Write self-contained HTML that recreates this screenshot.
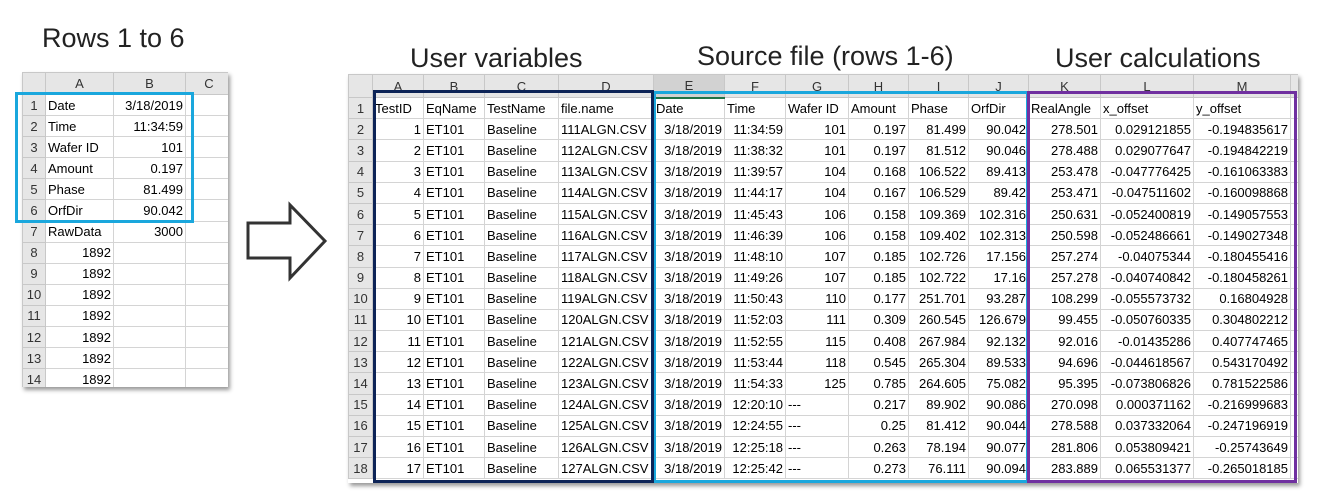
<!DOCTYPE html>
<html><head><meta charset="utf-8"><style>
body{margin:0;width:1320px;height:496px;background:#fff;position:relative;overflow:hidden;font-family:"Liberation Sans",Arial,sans-serif}
.t{position:absolute;font-size:27px;color:#222;white-space:nowrap}
table{border-collapse:collapse;position:absolute;table-layout:fixed;font-size:13px;color:#000}
tr{height:21.2px}
#s tr{height:21.1px}
td{border:1px solid #d4d4d4;padding:0 2px;white-space:nowrap;overflow:hidden}
td.h{background:#e6e6e6;color:#333;text-align:center;border-color:#c8c8c8}
td.r{text-align:right}
.box{position:absolute;box-sizing:border-box}
</style></head><body>
<div class="t" style="left:42px;top:23px">Rows 1 to 6</div>
<div class="t" style="left:410px;top:43px">User variables</div>
<div class="t" style="left:697px;top:41px">Source file (rows 1-6)</div>
<div class="t" style="left:1055px;top:43px">User calculations</div>

<div style="position:absolute;left:22px;top:72px;width:206px;height:315px;box-shadow:2px 3px 4px #999;overflow:hidden;background:#fff">
<table id="s" style="left:0;top:0;width:210px">
<colgroup><col style="width:23px"><col style="width:68px"><col style="width:72px"><col style="width:47px"></colgroup>
<tr style="height:22px"><td class="h"></td><td class="h">A</td><td class="h">B</td><td class="h">C</td></tr>
<tr><td class="h">1</td><td>Date</td><td class="r">3/18/2019</td><td></td></tr>
<tr><td class="h">2</td><td>Time</td><td class="r">11:34:59</td><td></td></tr>
<tr><td class="h">3</td><td>Wafer ID</td><td class="r">101</td><td></td></tr>
<tr><td class="h">4</td><td>Amount</td><td class="r">0.197</td><td></td></tr>
<tr><td class="h">5</td><td>Phase</td><td class="r">81.499</td><td></td></tr>
<tr><td class="h">6</td><td>OrfDir</td><td class="r">90.042</td><td></td></tr>
<tr><td class="h">7</td><td>RawData</td><td class="r">3000</td><td></td></tr>
<tr><td class="h">8</td><td class="r">1892</td><td></td><td></td></tr>
<tr><td class="h">9</td><td class="r">1892</td><td></td><td></td></tr>
<tr><td class="h">10</td><td class="r">1892</td><td></td><td></td></tr>
<tr><td class="h">11</td><td class="r">1892</td><td></td><td></td></tr>
<tr><td class="h">12</td><td class="r">1892</td><td></td><td></td></tr>
<tr><td class="h">13</td><td class="r">1892</td><td></td><td></td></tr>
<tr><td class="h">14</td><td class="r">1892</td><td></td><td></td></tr>
</table></div>
<div class="box" style="left:15px;top:92px;width:179px;height:131px;border:3px solid #1aa7dd"></div>

<svg style="position:absolute;left:0;top:0" width="1320" height="496"><path d="M248 223H290V205L325 241L290 278V258H248Z" fill="#fff" stroke="#333" stroke-width="3"/></svg>

<div style="position:absolute;left:348px;top:74px;width:950px;height:409px;box-shadow:2px 3px 4px #999;overflow:hidden;background:#fff">
<table style="left:0;top:0;width:960px">
<colgroup><col style="width:24px"><col style="width:51px"><col style="width:61px"><col style="width:74px"><col style="width:95px"><col style="width:71px"><col style="width:61px"><col style="width:63px"><col style="width:60px"><col style="width:60px"><col style="width:60px"><col style="width:72px"><col style="width:93px"><col style="width:97px"><col style="width:18px"></colgroup>
<tr style="height:23px"><td class="h"></td><td class="h">A</td><td class="h">B</td><td class="h">C</td><td class="h">D</td><td class="h" style="background:#d2d2d2;border-bottom:2px solid #217346">E</td><td class="h">F</td><td class="h">G</td><td class="h">H</td><td class="h">I</td><td class="h">J</td><td class="h">K</td><td class="h">L</td><td class="h">M</td><td class="h"></td></tr>
<tr><td class="h">1</td><td>TestID</td><td>EqName</td><td>TestName</td><td>file.name</td><td>Date</td><td>Time</td><td>Wafer ID</td><td>Amount</td><td>Phase</td><td>OrfDir</td><td>RealAngle</td><td>x_offset</td><td>y_offset</td><td></td></tr>
<tr><td class="h">2</td><td class="r">1</td><td>ET101</td><td>Baseline</td><td>111ALGN.CSV</td><td class="r">3/18/2019</td><td class="r">11:34:59</td><td class="r">101</td><td class="r">0.197</td><td class="r">81.499</td><td class="r">90.042</td><td class="r">278.501</td><td class="r">0.029121855</td><td class="r">-0.194835617</td><td></td></tr>
<tr><td class="h">3</td><td class="r">2</td><td>ET101</td><td>Baseline</td><td>112ALGN.CSV</td><td class="r">3/18/2019</td><td class="r">11:38:32</td><td class="r">101</td><td class="r">0.197</td><td class="r">81.512</td><td class="r">90.046</td><td class="r">278.488</td><td class="r">0.029077647</td><td class="r">-0.194842219</td><td></td></tr>
<tr><td class="h">4</td><td class="r">3</td><td>ET101</td><td>Baseline</td><td>113ALGN.CSV</td><td class="r">3/18/2019</td><td class="r">11:39:57</td><td class="r">104</td><td class="r">0.168</td><td class="r">106.522</td><td class="r">89.413</td><td class="r">253.478</td><td class="r">-0.047776425</td><td class="r">-0.161063383</td><td></td></tr>
<tr><td class="h">5</td><td class="r">4</td><td>ET101</td><td>Baseline</td><td>114ALGN.CSV</td><td class="r">3/18/2019</td><td class="r">11:44:17</td><td class="r">104</td><td class="r">0.167</td><td class="r">106.529</td><td class="r">89.42</td><td class="r">253.471</td><td class="r">-0.047511602</td><td class="r">-0.160098868</td><td></td></tr>
<tr><td class="h">6</td><td class="r">5</td><td>ET101</td><td>Baseline</td><td>115ALGN.CSV</td><td class="r">3/18/2019</td><td class="r">11:45:43</td><td class="r">106</td><td class="r">0.158</td><td class="r">109.369</td><td class="r">102.316</td><td class="r">250.631</td><td class="r">-0.052400819</td><td class="r">-0.149057553</td><td></td></tr>
<tr><td class="h">7</td><td class="r">6</td><td>ET101</td><td>Baseline</td><td>116ALGN.CSV</td><td class="r">3/18/2019</td><td class="r">11:46:39</td><td class="r">106</td><td class="r">0.158</td><td class="r">109.402</td><td class="r">102.313</td><td class="r">250.598</td><td class="r">-0.052486661</td><td class="r">-0.149027348</td><td></td></tr>
<tr><td class="h">8</td><td class="r">7</td><td>ET101</td><td>Baseline</td><td>117ALGN.CSV</td><td class="r">3/18/2019</td><td class="r">11:48:10</td><td class="r">107</td><td class="r">0.185</td><td class="r">102.726</td><td class="r">17.156</td><td class="r">257.274</td><td class="r">-0.04075344</td><td class="r">-0.180455416</td><td></td></tr>
<tr><td class="h">9</td><td class="r">8</td><td>ET101</td><td>Baseline</td><td>118ALGN.CSV</td><td class="r">3/18/2019</td><td class="r">11:49:26</td><td class="r">107</td><td class="r">0.185</td><td class="r">102.722</td><td class="r">17.16</td><td class="r">257.278</td><td class="r">-0.040740842</td><td class="r">-0.180458261</td><td></td></tr>
<tr><td class="h">10</td><td class="r">9</td><td>ET101</td><td>Baseline</td><td>119ALGN.CSV</td><td class="r">3/18/2019</td><td class="r">11:50:43</td><td class="r">110</td><td class="r">0.177</td><td class="r">251.701</td><td class="r">93.287</td><td class="r">108.299</td><td class="r">-0.055573732</td><td class="r">0.16804928</td><td></td></tr>
<tr><td class="h">11</td><td class="r">10</td><td>ET101</td><td>Baseline</td><td>120ALGN.CSV</td><td class="r">3/18/2019</td><td class="r">11:52:03</td><td class="r">111</td><td class="r">0.309</td><td class="r">260.545</td><td class="r">126.679</td><td class="r">99.455</td><td class="r">-0.050760335</td><td class="r">0.304802212</td><td></td></tr>
<tr><td class="h">12</td><td class="r">11</td><td>ET101</td><td>Baseline</td><td>121ALGN.CSV</td><td class="r">3/18/2019</td><td class="r">11:52:55</td><td class="r">115</td><td class="r">0.408</td><td class="r">267.984</td><td class="r">92.132</td><td class="r">92.016</td><td class="r">-0.01435286</td><td class="r">0.407747465</td><td></td></tr>
<tr><td class="h">13</td><td class="r">12</td><td>ET101</td><td>Baseline</td><td>122ALGN.CSV</td><td class="r">3/18/2019</td><td class="r">11:53:44</td><td class="r">118</td><td class="r">0.545</td><td class="r">265.304</td><td class="r">89.533</td><td class="r">94.696</td><td class="r">-0.044618567</td><td class="r">0.543170492</td><td></td></tr>
<tr><td class="h">14</td><td class="r">13</td><td>ET101</td><td>Baseline</td><td>123ALGN.CSV</td><td class="r">3/18/2019</td><td class="r">11:54:33</td><td class="r">125</td><td class="r">0.785</td><td class="r">264.605</td><td class="r">75.082</td><td class="r">95.395</td><td class="r">-0.073806826</td><td class="r">0.781522586</td><td></td></tr>
<tr><td class="h">15</td><td class="r">14</td><td>ET101</td><td>Baseline</td><td>124ALGN.CSV</td><td class="r">3/18/2019</td><td class="r">12:20:10</td><td>---</td><td class="r">0.217</td><td class="r">89.902</td><td class="r">90.086</td><td class="r">270.098</td><td class="r">0.000371162</td><td class="r">-0.216999683</td><td></td></tr>
<tr><td class="h">16</td><td class="r">15</td><td>ET101</td><td>Baseline</td><td>125ALGN.CSV</td><td class="r">3/18/2019</td><td class="r">12:24:55</td><td>---</td><td class="r">0.25</td><td class="r">81.412</td><td class="r">90.044</td><td class="r">278.588</td><td class="r">0.037332064</td><td class="r">-0.247196919</td><td></td></tr>
<tr><td class="h">17</td><td class="r">16</td><td>ET101</td><td>Baseline</td><td>126ALGN.CSV</td><td class="r">3/18/2019</td><td class="r">12:25:18</td><td>---</td><td class="r">0.263</td><td class="r">78.194</td><td class="r">90.077</td><td class="r">281.806</td><td class="r">0.053809421</td><td class="r">-0.25743649</td><td></td></tr>
<tr><td class="h">18</td><td class="r">17</td><td>ET101</td><td>Baseline</td><td>127ALGN.CSV</td><td class="r">3/18/2019</td><td class="r">12:25:42</td><td>---</td><td class="r">0.273</td><td class="r">76.111</td><td class="r">90.094</td><td class="r">283.889</td><td class="r">0.065531377</td><td class="r">-0.265018185</td><td></td></tr>
</table></div>
<div class="box" style="left:653px;top:91px;width:376px;height:392px;border:3px solid #1aa7dd"></div>
<div class="box" style="left:373px;top:90px;width:281px;height:393px;border:3px solid #0d2457"></div>
<div class="box" style="left:1027px;top:91px;width:270px;height:392px;border:3px solid #7030a0"></div>
</body></html>
